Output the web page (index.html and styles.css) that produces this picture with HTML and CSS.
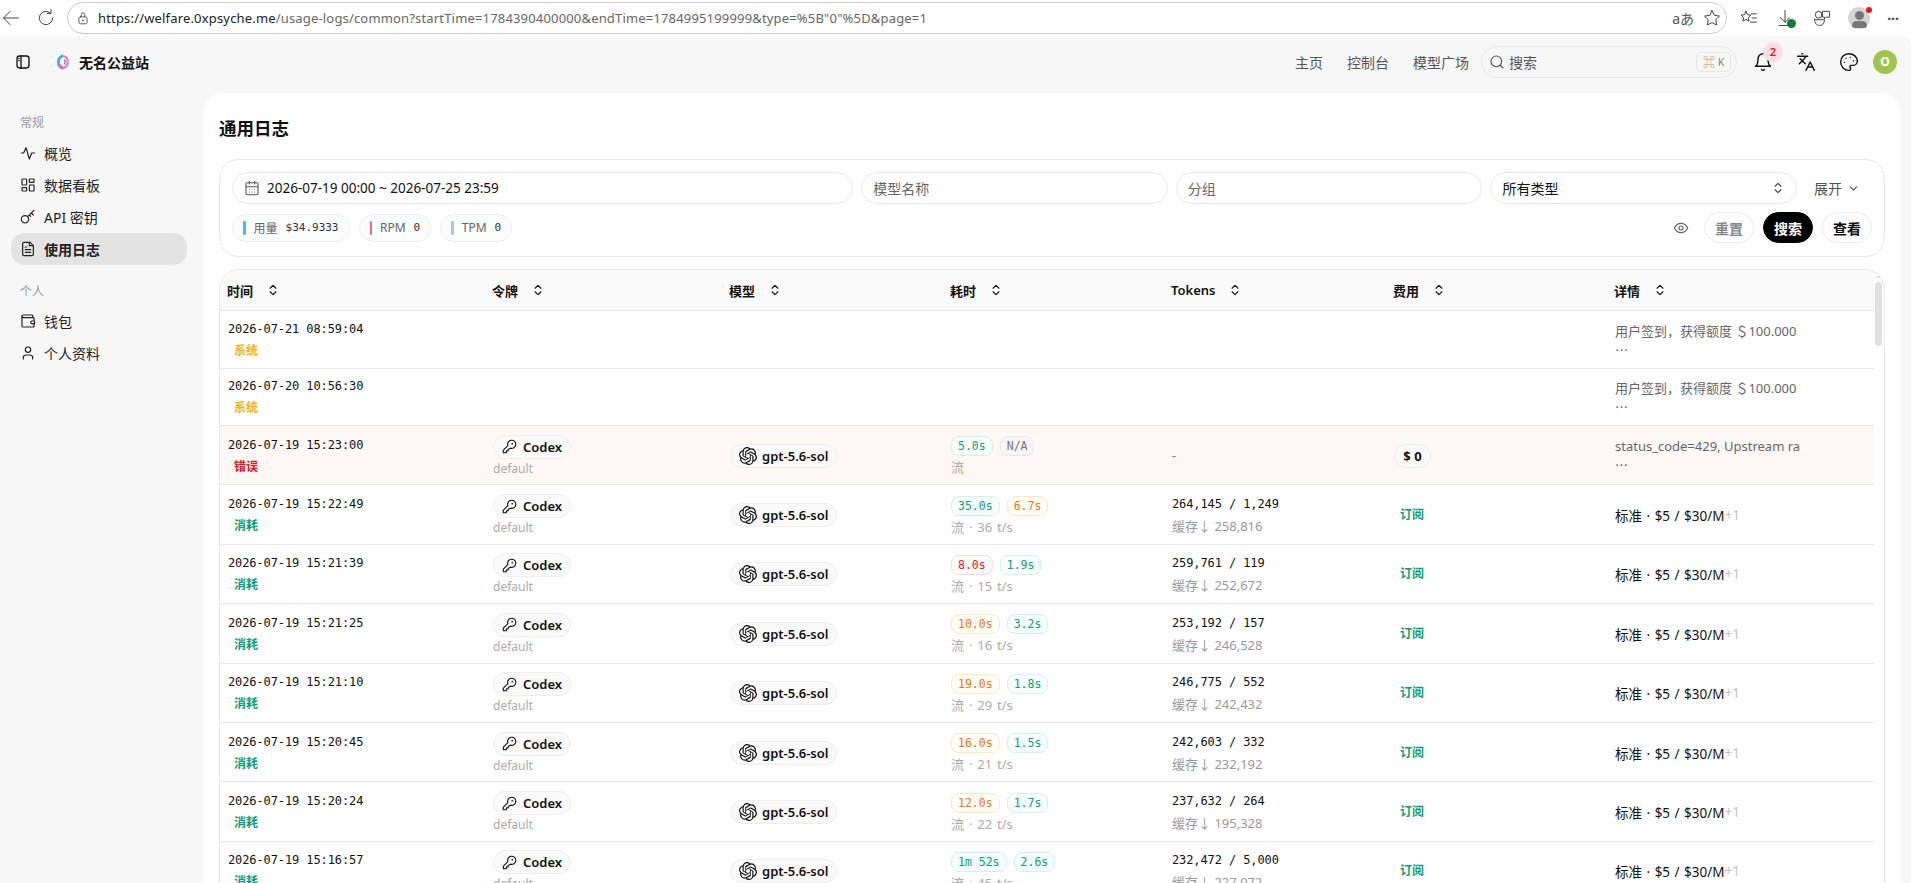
FILE: index.html
```html
<!DOCTYPE html>
<html lang="zh-CN">
<head>
  <meta charset="UTF-8">
  <title>通用日志 - 无名公益站</title>
  <link rel="stylesheet" href="styles.css">
</head>
<body>
  <svg class="defs" width="0" height="0">
    <symbol id="i-sort" viewBox="0 0 24 24"><path d="m7 15 5 5 5-5M7 9l5-5 5 5"/></symbol>
    <symbol id="i-key" viewBox="0 0 24 24"><path d="M2.586 17.414A2 2 0 0 0 2 18.828V21a1 1 0 0 0 1 1h3a1 1 0 0 0 1-1v-1a1 1 0 0 1 1-1h1a1 1 0 0 0 1-1v-1a1 1 0 0 1 1-1h.172a2 2 0 0 0 1.414-.586l.814-.814a6.500 6.500 0 1 0-4-4z"/><circle cx="16.500" cy="7.500" r=".5"/></symbol>
    <symbol id="i-openai" viewBox="0 0 24 24"><path class="fill" d="M22.2819 9.8211a5.9847 5.9847 0 0 0-.5157-4.9108 6.0462 6.0462 0 0 0-6.5098-2.9A6.0651 6.0651 0 0 0 4.9807 4.1818a5.9847 5.9847 0 0 0-3.9977 2.9 6.0462 6.0462 0 0 0 .7427 7.0966 5.98 5.98 0 0 0 .511 4.9107 6.051 6.051 0 0 0 6.5146 2.9001A5.9847 5.9847 0 0 0 13.2599 24a6.0557 6.0557 0 0 0 5.7718-4.2058 5.9894 5.9894 0 0 0 3.9977-2.9001 6.0557 6.0557 0 0 0-.7475-7.0729zm-9.022 12.6081a4.4755 4.4755 0 0 1-2.8764-1.0408l.1419-.0804 4.7783-2.7582a.7948.7948 0 0 0 .3927-.6813v-6.7369l2.02 1.1686a.071.071 0 0 1 .038.052v5.5826a4.504 4.504 0 0 1-4.4945 4.4944zm-9.6607-4.1254a4.4708 4.4708 0 0 1-.5346-3.0137l.142.0852 4.783 2.7582a.7712.7712 0 0 0 .7806 0l5.8428-3.3685v2.3324a.0804.0804 0 0 1-.0332.0615L9.74 19.9502a4.4992 4.4992 0 0 1-6.1408-1.6464zM2.3408 7.8956a4.485 4.485 0 0 1 2.3655-1.9728V11.6a.7664.7664 0 0 0 .3879.6765l5.8144 3.3543-2.0201 1.1685a.0757.0757 0 0 1-.071 0l-4.8303-2.7865A4.504 4.504 0 0 1 2.3408 7.872zm16.5963 3.8558L13.1038 8.364 15.1192 7.2a.0757.0757 0 0 1 .071 0l4.8303 2.7913a4.4944 4.4944 0 0 1-.6765 8.1042v-5.6772a.79.79 0 0 0-.407-.667zm2.0107-3.0231l-.142-.0852-4.7735-2.7818a.7759.7759 0 0 0-.7854 0L9.409 9.2297V6.8974a.0662.0662 0 0 1 .0284-.0615l4.8303-2.7866a4.4992 4.4992 0 0 1 6.6802 4.66zM8.3065 12.863l-2.02-1.1638a.0804.0804 0 0 1-.038-.0567V6.0742a4.4992 4.4992 0 0 1 7.3757-3.4537l-.142.0805L8.704 5.459a.7948.7948 0 0 0-.3927.6813zm1.0976-2.3654l2.602-1.4998 2.6069 1.4998v2.9994l-2.5974 1.4997-2.6067-1.4997Z"/></symbol>
  </svg>

  <div class="browser">
    <svg class="chrome-icon back" viewBox="0 0 24 24"><path d="M21 12H3M11 4l-8 8 8 8"/></svg>
    <svg class="chrome-icon reload" viewBox="0 0 24 24"><path d="M20 12a8 8 0 1 1-2.700-6M18 2v4.500h-4.500"/></svg>
    <div class="urlbar">
      <svg class="lock" viewBox="0 0 24 24"><rect x="5" y="10" width="14" height="12" rx="3"/><path d="M9 10V6a3 3 0 0 1 6 0v4"/><circle cx="12" cy="16" r="1"/></svg>
      <div class="url"><b>https://welfare.0xpsyche.me</b>/usage-logs/common?startTime=1784390400000&amp;endTime=1784995199999&amp;type=%5B"0"%5D&amp;page=1</div>
      <span class="read-aloud">aあ</span>
      <svg class="chrome-icon star" viewBox="0 0 24 24"><path d="m12 3 2.800 5.800 6.200.9-4.500 4.400 1.100 6.300-5.600-3-5.600 3 1.100-6.300L3 9.700l6.200-.9z"/></svg>
    </div>
    <div class="browser-tools">
      <svg class="chrome-icon" viewBox="0 0 24 24"><path d="m9.500 4 1.800 4 4 .6-3 2.900.7 4.200-3.500-2-3.500 2 .7-4.200-3-2.900 4-.6zM16 7h6M17 12h5M15 17h7"/></svg>
      <span class="download">
        <svg class="chrome-icon" viewBox="0 0 24 24"><path d="M12 3v14M6.500 11.500 12 17l5.500-5.500M5 21h10"/></svg>
        <i class="done"></i>
      </span>
      <svg class="chrome-icon" viewBox="0 0 24 24"><circle cx="8" cy="8" r="4"/><path d="M13 4h8v7h-4l-2 2v-2h-2zM3 14h12c0 4-2.500 7-6 7s-6-3-6-7z"/></svg>
      <span class="profile"><i class="profile-head"></i><i class="profile-body"></i><i class="profile-dot"></i></span>
      <span class="more">···</span>
    </div>
  </div>

  <div class="app">
    <header class="topbar">
      <div class="brand">
        <svg class="icon toggle" viewBox="0 0 24 24"><rect x="3" y="3" width="18" height="18" rx="4"/><path d="M9 3v18M5.800 7h.5M5.800 10h.5"/></svg>
        <svg class="logo" viewBox="0 0 24 24">
          <path d="M11 3C6.500 5 5 9 5 12.500S7 19.500 11 21" fill="none" stroke="#46a6f5" stroke-width="4" stroke-linecap="round"/>
          <path d="M7.500 17.500C8.500 19.500 10 20.500 11 21" fill="none" stroke="#e85fc0" stroke-width="4" stroke-linecap="round"/>
          <path d="M14 3.500C17.500 5 19 8.500 19 12s-2 7-5 8.500" fill="none" stroke="#f0729a" stroke-width="3" stroke-linecap="round"/>
          <path d="M14 9l1.500 3-1.500 3" fill="none" stroke="#7c6cf0" stroke-width="2"/>
        </svg>
        <span class="brand-name">无名公益站</span>
      </div>
      <nav class="topnav">
        <a>主页</a>
        <a>控制台</a>
        <a>模型广场</a>
      </nav>
      <div class="search">
        <svg class="icon search-icon" viewBox="0 0 24 24"><circle cx="11" cy="11" r="8"/><path d="m21 21-4.300-4.300"/></svg>
        <span class="search-text">搜索</span>
        <span class="kbd"><em>⌘</em> K</span>
      </div>
      <div class="top-actions">
        <span class="bell">
          <svg class="icon" viewBox="0 0 24 24"><path d="M6 8a6 6 0 0 1 12 0c0 7 3 9 3 9H3s3-2 3-9M10.300 21a1.900 1.900 0 0 0 3.400 0"/></svg>
          <i class="badge">2</i>
        </span>
        <svg class="icon" viewBox="0 0 24 24"><path d="m5 8 6 6M4 14l6-6 2-3M2 5h12M7 2h1M22 22l-5-10-5 10M14 18h6"/></svg>
        <svg class="icon" viewBox="0 0 24 24"><path d="M12 22a1 1 0 0 1 0-20 10 9 0 0 1 10 9 5 5 0 0 1-5 5h-2.250a1.750 1.750 0 0 0-1.400 2.800l.3.400a1.750 1.750 0 0 1-1.400 2.800z"/><circle cx="13.500" cy="6.500" r=".8" class="fill"/><circle cx="17.500" cy="10.500" r=".8" class="fill"/><circle cx="6.500" cy="12.500" r=".8" class="fill"/><circle cx="8.500" cy="7.500" r=".8" class="fill"/></svg>
        <span class="avatar">O</span>
      </div>
    </header>

    <div class="layout">
      <aside class="sidebar">
        <div class="side-label">常规</div>
        <a class="side-item">
          <svg class="icon" viewBox="0 0 24 24"><path d="M2 12h3.500L9 4l5 17 3.500-9H22"/></svg>概览
        </a>
        <a class="side-item">
          <svg class="icon" viewBox="0 0 24 24"><rect x="3" y="3" width="7" height="9" rx="1"/><rect x="14" y="3" width="7" height="5" rx="1"/><rect x="14" y="12" width="7" height="9" rx="1"/><rect x="3" y="16" width="7" height="5" rx="1"/></svg>数据看板
        </a>
        <a class="side-item">
          <svg class="icon" viewBox="0 0 24 24"><circle cx="7.500" cy="15.500" r="5.500"/><path d="m11.500 11.500 9.500-9.500M17 6l3 3M14 9l2 2"/></svg>API 密钥
        </a>
        <a class="side-item active">
          <svg class="icon" viewBox="0 0 24 24"><path d="M15 2H6a2 2 0 0 0-2 2v16a2 2 0 0 0 2 2h12a2 2 0 0 0 2-2V7z"/><path d="M14 2v5h6M16 13H8M16 17H8M10 9H8"/></svg>使用日志
        </a>
        <div class="side-label second">个人</div>
        <a class="side-item">
          <svg class="icon" viewBox="0 0 24 24"><path d="M19 7V4a1 1 0 0 0-1-1H5a2 2 0 0 0 0 4h15a1 1 0 0 1 1 1v4h-3a2 2 0 0 0 0 4h3a1 1 0 0 0 1-1v-2a1 1 0 0 0-1-1"/><path d="M3 5v14a2 2 0 0 0 2 2h15a1 1 0 0 0 1-1v-4"/></svg>钱包
        </a>
        <a class="side-item">
          <svg class="icon" viewBox="0 0 24 24"><path d="M19 21v-2a4 4 0 0 0-4-4H9a4 4 0 0 0-4 4v2"/><circle cx="12" cy="7" r="4"/></svg>个人资料
        </a>
      </aside>

      <main class="panel">
        <h1 class="title">通用日志</h1>

        <section class="filters">
          <div class="filter-row">
            <div class="filter-grid">
              <div class="field wide">
                <svg class="icon field-icon" viewBox="0 0 24 24"><rect x="3" y="4" width="18" height="18" rx="2"/><path d="M8 2v4M16 2v4M3 10h18M8 14h.01M12 14h.01M16 14h.01M8 18h.01M12 18h.01M16 18h.01"/></svg>
                <span class="date">2026-07-19 00:00 ~ 2026-07-25 23:59</span>
              </div>
              <div class="field placeholder">模型名称</div>
              <div class="field placeholder">分组</div>
              <div class="field select">所有类型<svg class="sort"><use href="#i-sort"/></svg></div>
            </div>
            <div class="expand">展开<svg class="icon" viewBox="0 0 24 24"><path d="m6 9 6 6 6-6"/></svg></div>
          </div>
          <div class="action-row">
            <div class="stats">
              <span class="stat"><i class="bar blue"></i>用量<b>$34.9333</b></span>
              <span class="stat"><i class="bar pink"></i>RPM<b>0</b></span>
              <span class="stat"><i class="bar slate"></i>TPM<b>0</b></span>
            </div>
            <div class="actions">
              <svg class="icon eye" viewBox="0 0 24 24"><path d="M2 12s3.500-7 10-7 10 7 10 7-3.500 7-10 7-10-7-10-7z"/><circle cx="12" cy="12" r="3"/></svg>
              <button class="btn muted">重置</button>
              <button class="btn primary">搜索</button>
              <button class="btn">查看</button>
            </div>
          </div>
        </section>

        <section class="table">
          <div class="table-body">
            <div class="row head">
              <div>时间<svg class="sort"><use href="#i-sort"/></svg></div>
              <div>令牌<svg class="sort"><use href="#i-sort"/></svg></div>
              <div>模型<svg class="sort"><use href="#i-sort"/></svg></div>
              <div>耗时<svg class="sort"><use href="#i-sort"/></svg></div>
              <div>Tokens<svg class="sort"><use href="#i-sort"/></svg></div>
              <div>费用<svg class="sort"><use href="#i-sort"/></svg></div>
              <div>详情<svg class="sort"><use href="#i-sort"/></svg></div>
            </div>

            <div class="row short">
              <div class="cell"><span class="time">2026-07-21 08:59:04</span><span class="status sys">系统</span></div>
              <div></div><div></div><div></div><div></div><div></div>
              <div class="cell detail">用户签到，获得额度 ＄100.000<span class="cjk">⋯</span></div>
            </div>
            <div class="row short">
              <div class="cell"><span class="time">2026-07-20 10:56:30</span><span class="status sys">系统</span></div>
              <div></div><div></div><div></div><div></div><div></div>
              <div class="cell detail">用户签到，获得额度 ＄100.000<span class="cjk">⋯</span></div>
            </div>

            <div class="row error">
              <div class="cell"><span class="time">2026-07-19 15:23:00</span><span class="status err">错误</span></div>
              <div class="cell"><span class="tag"><svg class="key"><use href="#i-key"/></svg>Codex</span><span class="sub">default</span></div>
              <div class="cell"><span class="tag"><svg class="oai"><use href="#i-openai"/></svg>gpt-5.6-sol</span></div>
              <div class="cell"><span class="pills"><span class="pill ok">5.0s</span><span class="pill na">N/A</span></span><span class="sub speed">流</span></div>
              <div class="cell"><span class="dash">-</span></div>
              <div class="cell"><span class="tag fee">$ 0</span></div>
              <div class="cell detail">status_code=429, Upstream ra<span class="cjk">⋯</span></div>
            </div>

            <div class="row">
              <div class="cell"><span class="time">2026-07-19 15:22:49</span><span class="status use">消耗</span></div>
              <div class="cell"><span class="tag"><svg class="key"><use href="#i-key"/></svg>Codex</span><span class="sub">default</span></div>
              <div class="cell"><span class="tag"><svg class="oai"><use href="#i-openai"/></svg>gpt-5.6-sol</span></div>
              <div class="cell"><span class="pills"><span class="pill ok">35.0s</span><span class="pill warn">6.7s</span></span><span class="sub speed">流 · 36 t/s</span></div>
              <div class="cell"><span class="tokens">264,145 / 1,249</span><span class="cache">缓存↓ 258,816</span></div>
              <div class="cell"><span class="status use">订阅</span></div>
              <div class="cell price">标准 · $5 / $30/M<span class="more-price">+1</span></div>
            </div>
            <div class="row">
              <div class="cell"><span class="time">2026-07-19 15:21:39</span><span class="status use">消耗</span></div>
              <div class="cell"><span class="tag"><svg class="key"><use href="#i-key"/></svg>Codex</span><span class="sub">default</span></div>
              <div class="cell"><span class="tag"><svg class="oai"><use href="#i-openai"/></svg>gpt-5.6-sol</span></div>
              <div class="cell"><span class="pills"><span class="pill bad">8.0s</span><span class="pill ok">1.9s</span></span><span class="sub speed">流 · 15 t/s</span></div>
              <div class="cell"><span class="tokens">259,761 / 119</span><span class="cache">缓存↓ 252,672</span></div>
              <div class="cell"><span class="status use">订阅</span></div>
              <div class="cell price">标准 · $5 / $30/M<span class="more-price">+1</span></div>
            </div>
            <div class="row">
              <div class="cell"><span class="time">2026-07-19 15:21:25</span><span class="status use">消耗</span></div>
              <div class="cell"><span class="tag"><svg class="key"><use href="#i-key"/></svg>Codex</span><span class="sub">default</span></div>
              <div class="cell"><span class="tag"><svg class="oai"><use href="#i-openai"/></svg>gpt-5.6-sol</span></div>
              <div class="cell"><span class="pills"><span class="pill warn">10.0s</span><span class="pill ok">3.2s</span></span><span class="sub speed">流 · 16 t/s</span></div>
              <div class="cell"><span class="tokens">253,192 / 157</span><span class="cache">缓存↓ 246,528</span></div>
              <div class="cell"><span class="status use">订阅</span></div>
              <div class="cell price">标准 · $5 / $30/M<span class="more-price">+1</span></div>
            </div>
            <div class="row">
              <div class="cell"><span class="time">2026-07-19 15:21:10</span><span class="status use">消耗</span></div>
              <div class="cell"><span class="tag"><svg class="key"><use href="#i-key"/></svg>Codex</span><span class="sub">default</span></div>
              <div class="cell"><span class="tag"><svg class="oai"><use href="#i-openai"/></svg>gpt-5.6-sol</span></div>
              <div class="cell"><span class="pills"><span class="pill warn">19.0s</span><span class="pill ok">1.8s</span></span><span class="sub speed">流 · 29 t/s</span></div>
              <div class="cell"><span class="tokens">246,775 / 552</span><span class="cache">缓存↓ 242,432</span></div>
              <div class="cell"><span class="status use">订阅</span></div>
              <div class="cell price">标准 · $5 / $30/M<span class="more-price">+1</span></div>
            </div>
            <div class="row">
              <div class="cell"><span class="time">2026-07-19 15:20:45</span><span class="status use">消耗</span></div>
              <div class="cell"><span class="tag"><svg class="key"><use href="#i-key"/></svg>Codex</span><span class="sub">default</span></div>
              <div class="cell"><span class="tag"><svg class="oai"><use href="#i-openai"/></svg>gpt-5.6-sol</span></div>
              <div class="cell"><span class="pills"><span class="pill warn">16.0s</span><span class="pill ok">1.5s</span></span><span class="sub speed">流 · 21 t/s</span></div>
              <div class="cell"><span class="tokens">242,603 / 332</span><span class="cache">缓存↓ 232,192</span></div>
              <div class="cell"><span class="status use">订阅</span></div>
              <div class="cell price">标准 · $5 / $30/M<span class="more-price">+1</span></div>
            </div>
            <div class="row">
              <div class="cell"><span class="time">2026-07-19 15:20:24</span><span class="status use">消耗</span></div>
              <div class="cell"><span class="tag"><svg class="key"><use href="#i-key"/></svg>Codex</span><span class="sub">default</span></div>
              <div class="cell"><span class="tag"><svg class="oai"><use href="#i-openai"/></svg>gpt-5.6-sol</span></div>
              <div class="cell"><span class="pills"><span class="pill warn">12.0s</span><span class="pill ok">1.7s</span></span><span class="sub speed">流 · 22 t/s</span></div>
              <div class="cell"><span class="tokens">237,632 / 264</span><span class="cache">缓存↓ 195,328</span></div>
              <div class="cell"><span class="status use">订阅</span></div>
              <div class="cell price">标准 · $5 / $30/M<span class="more-price">+1</span></div>
            </div>
            <div class="row">
              <div class="cell"><span class="time">2026-07-19 15:16:57</span><span class="status use">消耗</span></div>
              <div class="cell"><span class="tag"><svg class="key"><use href="#i-key"/></svg>Codex</span><span class="sub">default</span></div>
              <div class="cell"><span class="tag"><svg class="oai"><use href="#i-openai"/></svg>gpt-5.6-sol</span></div>
              <div class="cell"><span class="pills"><span class="pill ok">1m 52s</span><span class="pill ok">2.6s</span></span><span class="sub speed">流 · 45 t/s</span></div>
              <div class="cell"><span class="tokens">232,472 / 5,000</span><span class="cache">缓存↓ 227,072</span></div>
              <div class="cell"><span class="status use">订阅</span></div>
              <div class="cell price">标准 · $5 / $30/M<span class="more-price">+1</span></div>
            </div>
          </div>
          <div class="scrollbar"><i class="scroll-up"></i><i class="scroll-thumb"></i></div>
        </section>
      </main>
    </div>
  </div>
</body>
</html>
```

FILE: styles.css
```css
* { box-sizing: border-box; }
html, body {
  margin: 0;
  height: 883px;
  overflow: hidden;
}
body {
  font-family: "Noto Sans", "Noto Sans CJK SC", sans-serif;
  font-size: 13px;
  color: #111;
  background: #fff;
  display: flex;
  flex-direction: column;
}
.defs { position: absolute; }
svg { fill: none; stroke: currentColor; stroke-linecap: round; stroke-linejoin: round; flex: none; }
.fill { fill: currentColor; stroke: none; }
i, em { font-style: normal; }

/* browser bar */
.browser {
  height: 36px;
  flex: none;
  display: flex;
  align-items: center;
  padding-left: 1px;
  background: #fff;
}
.chrome-icon { width: 20px; height: 20px; stroke-width: 1.2; color: #444; }
.back { margin-right: 15px; }
.reload { margin-right: 11px; }
.urlbar {
  width: 1660px;
  height: 32px;
  border: 1.5px solid #ccc;
  border-radius: 16px;
  display: flex;
  align-items: center;
  padding: 0 4px 0 8px;
}
.lock { width: 14px; height: 14px; stroke-width: 1.6; color: #555; margin-right: 8px; }
.url {
  flex: 1;
  font-size: 13px;
  letter-spacing: .17px;
  color: #666;
  white-space: nowrap;
}
.url b { font-weight: 400; color: #222; }
.read-aloud { font-size: 14px; color: #555; margin-right: 8px; }
.browser-tools {
  flex: 1;
  display: flex;
  align-items: center;
  justify-content: space-between;
  padding: 0 12px 0 11px;
}
.download { position: relative; display: flex; }
.done {
  position: absolute;
  right: -1px;
  bottom: 0;
  width: 9px;
  height: 9px;
  border-radius: 50%;
  background: #0f7b3f;
}
.profile {
  position: relative;
  width: 22px;
  height: 22px;
  border-radius: 50%;
  background: #d5d5d5;
  overflow: visible;
}
.profile-head {
  position: absolute;
  left: 7px;
  top: 4px;
  width: 9px;
  height: 9px;
  border-radius: 50%;
  background: #777;
}
.profile-body {
  position: absolute;
  left: 4px;
  bottom: 1px;
  width: 15px;
  height: 7px;
  border-radius: 8px 8px 4px 4px;
  background: #777;
}
.profile-dot {
  position: absolute;
  right: -2px;
  top: 0;
  width: 6px;
  height: 6px;
  border-radius: 50%;
  background: #e81123;
}
.more { font-size: 14px; font-weight: 700; color: #444; }

/* app shell */
.app {
  flex: 1;
  min-height: 0;
  background: #f7f7f7;
  border-radius: 0 10px 0 0;
  display: flex;
  flex-direction: column;
}
.icon { width: 16px; height: 16px; stroke-width: 2; }
.topbar {
  height: 57px;
  flex: none;
  display: flex;
  align-items: center;
  padding: 0 14px 6px 15px;
}
.brand { display: flex; align-items: center; flex: 1; }
.toggle { margin-right: 24px; }
.logo { width: 16px; height: 16px; margin-right: 8px; }
.brand-name { font-size: 14px; font-weight: 600; }
.topnav { display: flex; gap: 24px; font-size: 14px; color: #555; margin-right: 12px; }
.search {
  width: 256px;
  height: 32px;
  border: 1px solid #e8e8e8;
  border-radius: 16px;
  display: flex;
  align-items: center;
  padding: 0 5px 0 7px;
  color: #555;
}
.search-icon { width: 16px; height: 16px; stroke-width: 1.7; margin-right: 4px; }
.search-text { flex: 1; font-size: 14px; }
.kbd {
  width: 35px;
  height: 20px;
  border: 1px solid #e6e6e6;
  border-radius: 5px;
  font-size: 10px;
  color: #777;
  display: flex;
  align-items: center;
  justify-content: center;
  gap: 3px;
}
.kbd em { color: #c99a5a; font-size: 12px; }
.top-actions { display: flex; align-items: center; margin-left: 16px; gap: 23px; }
.top-actions .icon { width: 20px; height: 20px; stroke-width: 1.7; display: block; }
.bell { position: relative; }
.badge {
  position: absolute;
  left: 2px;
  top: -10px;
  width: 20px;
  height: 20px;
  margin-left: 8px;
  border-radius: 50%;
  background: #fbdfe2;
  color: #e5142a;
  font-size: 11px;
  font-weight: 600;
  line-height: 20px;
  text-align: center;
}
.avatar {
  width: 24px;
  height: 24px;
  border-radius: 50%;
  background: #9fc54f;
  color: #fff;
  font-size: 12px;
  font-weight: 700;
  line-height: 24px;
  text-align: center;
  margin-left: -9px;
}
.layout { flex: 1; min-height: 0; display: flex; }

/* sidebar */
.sidebar { width: 203px; flex: none; padding: 21px 16px 0 11px; }
.side-label { font-size: 12px; line-height: 18px; color: #999; padding-left: 9px; margin-bottom: 5px; }
.side-label.second { margin-top: 18px; margin-bottom: 4px; }
.side-item {
  height: 32px;
  border-radius: 14px;
  display: flex;
  align-items: center;
  gap: 8px;
  padding-left: 9px;
  font-size: 14px;
  color: #222;
}
.side-item .icon { width: 16px; height: 16px; stroke-width: 1.8; }
.side-item.active { background: #e3e3e3; font-weight: 600; }

/* main panel */
.panel {
  flex: 1;
  min-width: 0;
  margin-right: 10px;
  padding: 23px 16px 0;
  background: #fff;
  border-radius: 20px 20px 0 0;
  overflow: hidden;
}
.title { margin: 0 0 19px; font-size: 17.5px; line-height: 24px; font-weight: 700; }
.filters {
  height: 98px;
  padding: 12px;
  border: 1px solid #e8e8e8;
  border-radius: 20px;
}
.filter-row { display: flex; }
.filter-grid {
  flex: 1;
  display: grid;
  grid-template-columns: repeat(5, 1fr);
  gap: 8px;
}
.expand {
  width: 75px;
  padding-left: 17px;
  display: flex;
  align-items: center;
  gap: 5px;
  font-size: 14px;
  color: #555;
}
.expand .icon { width: 13px; height: 13px; }
.field {
  height: 32px;
  border: 1px solid #e8e8e8;
  border-radius: 16px;
  display: flex;
  align-items: center;
  padding: 0 11px;
  font-size: 14px;
}
.field.wide { grid-column: span 2; }
.field-icon { width: 16px; height: 16px; stroke-width: 1.6; color: #555; margin-right: 7px; }
.date { font-size: 13.5px; }
.placeholder { color: #666; }
.select { justify-content: space-between; }
.action-row {
  height: 31px;
  margin-top: 8px;
  display: flex;
  align-items: center;
  justify-content: space-between;
}
.stats { display: flex; gap: 9px; }
.stat {
  height: 28px;
  padding: 0 10px;
  border: 1px solid #eee;
  border-radius: 14px;
  background: #fbfcfc;
  display: flex;
  align-items: center;
  font-size: 12px;
  color: #666;
}
.stat b { font-family: "DejaVu Sans Mono", monospace; font-size: 11px; font-weight: 400; color: #333; margin-left: 8px; }
.bar { width: 2.5px; height: 14px; border-radius: 1px; margin-right: 8px; }
.blue { background: #4fb3f6; }
.pink { background: #f4668a; }
.slate { background: #b5c4da; }
.actions { display: flex; align-items: center; gap: 9px; }
.eye { width: 16px; height: 16px; stroke-width: 1.8; color: #666; margin-right: 6px; }
.btn {
  width: 50px;
  height: 31px;
  border: 1px solid #ececec;
  border-radius: 16px;
  background: #fff;
  font: 600 14px "Noto Sans", "Noto Sans CJK SC", sans-serif;
  color: #111;
  padding: 0;
}
.btn.muted { color: #888; }
.btn.primary { background: #000; border-color: #000; color: #fff; }

/* table */
.table {
  margin-top: 12px;
  height: 640px;
  border: 1px solid #e8e8e8;
  border-radius: 20px;
  overflow: hidden;
  display: flex;
}
.table-body { flex: 1; min-width: 0; }
.scrollbar { width: 10px; flex: none; position: relative; }
.scroll-up {
  position: absolute;
  left: 2px;
  top: 4px;
  border: 3px solid transparent;
  border-top: 0;
  border-bottom: 4px solid #ddd;
}
.scroll-thumb {
  position: absolute;
  left: 1px;
  top: 12px;
  width: 7px;
  height: 64px;
  border-radius: 4px;
  background: #e1e1e1;
}
.row {
  display: grid;
  grid-template-columns: 265px 237px 221px 221px 222px 221px 1fr;
  height: 59.4px;
  border-bottom: 1px solid #e8e8e8;
}
.row.short { height: 57.5px; }
.row.error { background: #fff8f7; }
.row.head {
  height: 41px;
  background: #fafafa;
  font-size: 13px;
  font-weight: 600;
}
.head > div { display: flex; align-items: center; padding-left: 7px; }
.sort { width: 14px; height: 14px; stroke-width: 2; margin-left: 12px; }
.head .sort { margin-left: 13px; }
.select .sort { color: #444; }
.cell {
  min-width: 0;
  padding: 1px 0 0 8px;
  display: flex;
  flex-direction: column;
  justify-content: center;
  align-items: flex-start;
}
.time, .tokens {
  font-family: "DejaVu Sans Mono", monospace;
  font-size: 12px;
  letter-spacing: -.1px;
  line-height: 18px;
  white-space: nowrap;
}
.status { font-size: 12px; font-weight: 600; line-height: 18px; padding-left: 6px; margin-top: 4px; }
.sys { color: #f5b014; }
.err { color: #e5142a; }
.use { color: #0f9d78; }
.tag {
  height: 24px;
  padding: 0 8px;
  border: 1px solid #eeeeee;
  border-radius: 12px;
  background: #fafafa;
  display: inline-flex;
  align-items: center;
  gap: 5px;
  font-size: 13px;
  font-weight: 600;
  white-space: nowrap;
}
.key { width: 15px; height: 15px; stroke-width: 1.8; margin-right: 1px; }
.oai { width: 18px; height: 18px; }
.sub { font-size: 12px; line-height: 16px; color: #aaa; margin-top: 2px; }
.speed { font-size: 13px; word-spacing: 1.5px; margin-top: 3px; }
.pills { display: flex; gap: 7px; }
.pill {
  height: 20px;
  padding: 0 6px;
  border: 1px solid;
  border-radius: 8px;
  font-family: "DejaVu Sans Mono", monospace;
  font-size: 11.5px;
  line-height: 18px;
  white-space: nowrap;
}
.ok { color: #0f9d78; border-color: #cff3e7; background: #f8fefc; }
.warn { color: #e8760c; border-color: #fde9bd; background: #fffdf8; }
.bad { color: #e5142a; border-color: #fcd9de; background: #fffafa; }
.na { color: #777; border-color: #e8e8e8; background: #f6f6f6; }
.dash { color: #777; font-size: 12px; }
.tokens { color: #111; }
.cache { font-size: 13px; line-height: 18px; color: #999; margin-top: 4px; }
.tag.fee { width: 37px; justify-content: center; padding: 0; font-weight: 700; }
.cell .status:only-child { margin-top: 0; }
.detail { color: #666; font-size: 13px; white-space: nowrap; }
.cjk { font-family: "Noto Sans CJK SC", sans-serif; }
.price { font-size: 13.5px; word-spacing: 1px; flex-direction: row; justify-content: flex-start; align-items: center; white-space: nowrap; }
.more-price { color: #c4c4c4; }
```
